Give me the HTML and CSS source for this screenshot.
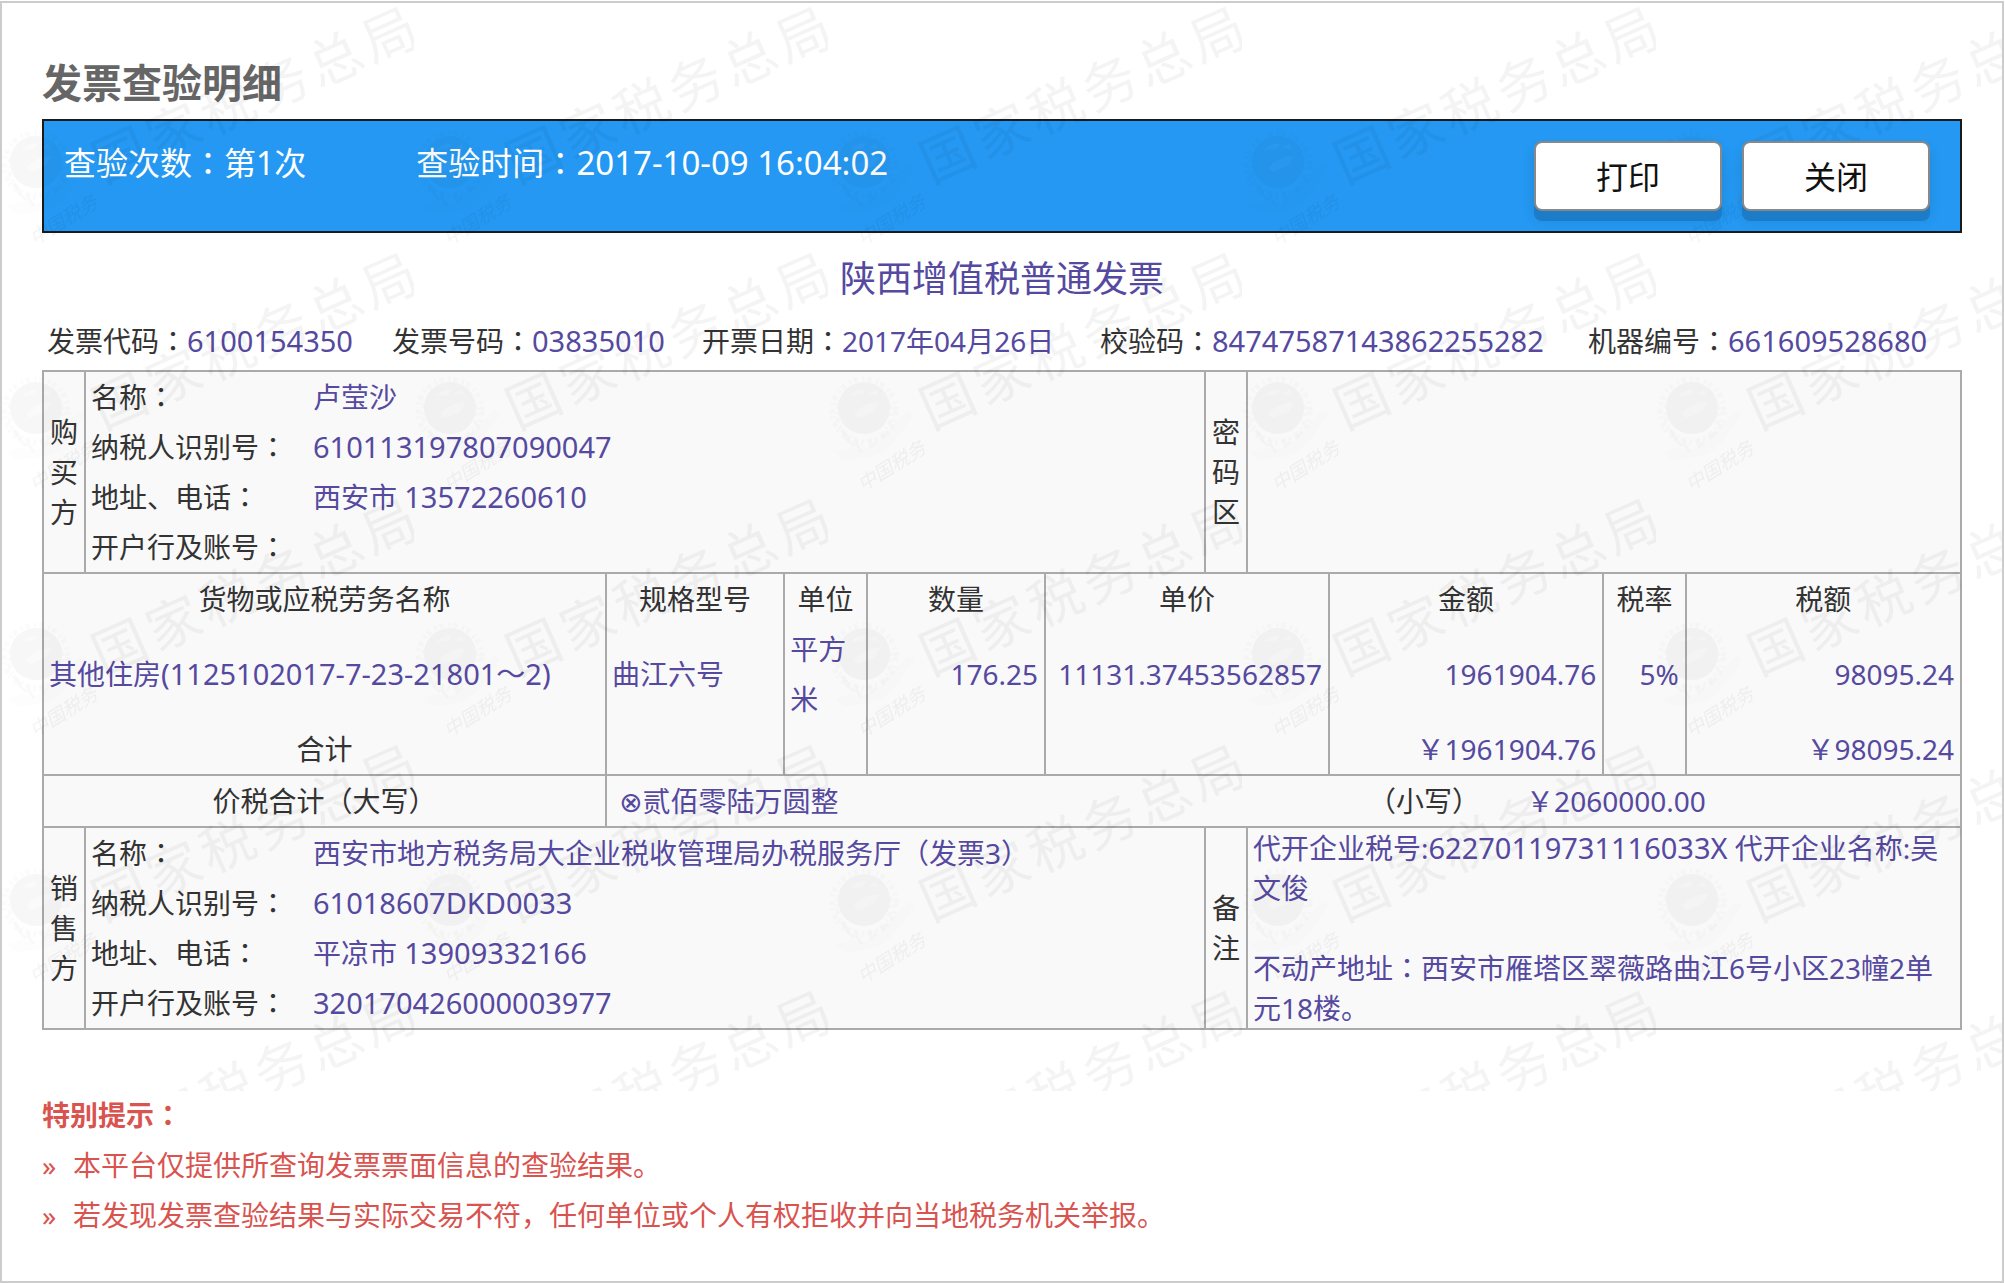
FILE: index.html
```html
<!DOCTYPE html>
<html lang="zh-CN">
<head>
<meta charset="utf-8">
<meta name="viewport" content="width=device-width, initial-scale=1">
<title>发票查验明细</title>
<link rel="stylesheet" href="styles.css">
</head>
<body>
<main class="frame">
  <h1 class="page-title">发票查验明细</h1>

  <section class="bar">
    <p class="bar-item">查验次数<span class="mid" lang="zh-TW">：</span>第1次</p>
    <p class="bar-item">查验时间<span class="mid" lang="zh-TW">：</span><span class="n">2017-10-09 16:04:02</span></p>
    <div class="bar-actions">
      <button type="button" class="btn">打印</button>
      <button type="button" class="btn">关闭</button>
    </div>
  </section>

  <h2 class="invoice-title">陕西增值税普通发票</h2>

  <ul class="meta">
    <li>发票代码<span class="mid" lang="zh-TW">：</span><span class="val n">6100154350</span></li>
    <li>发票号码<span class="mid" lang="zh-TW">：</span><span class="val n">03835010</span></li>
    <li>开票日期<span class="mid" lang="zh-TW">：</span><span class="val">2017年04月26日</span></li>
    <li>校验码<span class="mid" lang="zh-TW">：</span><span class="val n">84747587143862255282</span></li>
    <li>机器编号<span class="mid" lang="zh-TW">：</span><span class="val n">661609528680</span></li>
  </ul>

  <div class="invoice">
    <table class="grid party">
      <colgroup><col class="c-side"><col><col class="c-side"><col class="c-note"></colgroup>
      <tr>
        <th class="side" scope="row">购买方</th>
        <td>
          <dl class="fields">
            <dt>名称<span class="mid" lang="zh-TW">：</span></dt><dd>卢莹沙</dd>
            <dt>纳税人识别号<span class="mid" lang="zh-TW">：</span></dt><dd><span class="n">610113197807090047</span></dd>
            <dt>地址、电话<span class="mid" lang="zh-TW">：</span></dt><dd>西安市 <span class="n">13572260610</span></dd>
            <dt>开户行及账号<span class="mid" lang="zh-TW">：</span></dt><dd></dd>
          </dl>
        </td>
        <th class="side" scope="row">密码区</th>
        <td></td>
      </tr>
    </table>

    <table class="grid items">
      <colgroup><col class="c-name"><col class="c-spec"><col class="c-unit"><col class="c-qty"><col class="c-price"><col class="c-amount"><col class="c-rate"><col></colgroup>
      <thead>
        <tr>
          <th scope="col">货物或应税劳务名称</th>
          <th scope="col">规格型号</th>
          <th scope="col">单位</th>
          <th scope="col">数量</th>
          <th scope="col">单价</th>
          <th scope="col">金额</th>
          <th scope="col">税率</th>
          <th scope="col">税额</th>
        </tr>
      </thead>
      <tbody>
        <tr class="val">
          <td>其他住房<span class="n">(1125102017-7-23-21801～2)</span></td>
          <td>曲江六号</td>
          <td>平方米</td>
          <td class="num">176.25</td>
          <td class="num">11131.37453562857</td>
          <td class="num">1961904.76</td>
          <td class="num">5%</td>
          <td class="num">98095.24</td>
        </tr>
      </tbody>
      <tfoot>
        <tr class="val">
          <th scope="row">合计</th>
          <td></td><td></td><td></td><td></td>
          <td class="num">￥1961904.76</td>
          <td></td>
          <td class="num">￥98095.24</td>
        </tr>
      </tfoot>
    </table>

    <table class="grid total">
      <colgroup><col class="c-name"><col></colgroup>
      <tr>
        <th scope="row">价税合计（大写）</th>
        <td>
          <div class="sum">
            <span class="val"><span class="seal">⊗</span>贰佰零陆万圆整</span>
            <span>（小写）</span>
            <span class="val">￥2060000.00</span>
          </div>
        </td>
      </tr>
    </table>

    <table class="grid party">
      <colgroup><col class="c-side"><col><col class="c-side"><col class="c-note"></colgroup>
      <tr>
        <th class="side" scope="row">销售方</th>
        <td>
          <dl class="fields">
            <dt>名称<span class="mid" lang="zh-TW">：</span></dt><dd>西安市地方税务局大企业税收管理局办税服务厅（发票3）</dd>
            <dt>纳税人识别号<span class="mid" lang="zh-TW">：</span></dt><dd><span class="n">61018607DKD0033</span></dd>
            <dt>地址、电话<span class="mid" lang="zh-TW">：</span></dt><dd>平凉市 <span class="n">13909332166</span></dd>
            <dt>开户行及账号<span class="mid" lang="zh-TW">：</span></dt><dd><span class="n">320170426000003977</span></dd>
          </dl>
        </td>
        <th class="side" scope="row">备注</th>
        <td class="note val">代开企业税号:<span class="n">62270119731116033X</span> 代开企业名称:吴文俊<br><br>不动产地址<span class="mid" lang="zh-TW">：</span>西安市雁塔区翠薇路曲江6号小区23幢2单元18楼。</td>
      </tr>
    </table>
  </div>

  <section class="tips">
    <h3 class="tips-title">特别提示<span class="mid" lang="zh-TW">：</span></h3>
    <ul class="tips-list">
      <li>本平台仅提供所查询发票票面信息的查验结果。</li>
      <li>若发现发票查验结果与实际交易不符，任何单位或个人有权拒收并向当地税务机关举报。</li>
    </ul>
  </section>

  <svg class="watermark" aria-hidden="true">
    <defs>
      <pattern id="mark" width="414" height="246" patternUnits="userSpaceOnUse" x="-2" y="-3">
        <text class="mark-text" transform="translate(103 184) rotate(-24)" x="0 59 118 177 236 295" y="0">国家税务总局</text>
        <g fill="#333" opacity=".9">
          <circle cx="36" cy="162" r="26"/>
          <circle cx="36" cy="165" r="32" fill="none" stroke="#333" stroke-width="5" stroke-dasharray="4 5 2 3" opacity=".5"/>
          <circle cx="36" cy="168" r="27" fill="none" stroke="#333" stroke-width="4" stroke-dasharray="2 4 5 3" opacity=".4"/>
          <path d="M8 206q4 6 10 8l16-2q20-2 32-16l20-28-6-4-16 16q-12 20-30 24l-12-2z" opacity=".25"/>
          <path d="M18 192l8 8M28 198l6 8M42 202l6-6M54 192l6-6M14 184l6 8" stroke="#333" stroke-width="3" opacity=".6"/>
        </g>
        <g fill="#fff" opacity=".4">
          <path d="M22 150q8-8 16-6l-4 5zM40 148l8-4 2 5zM26 168q10-12 26-12l-6 10-16 6z"/>
        </g>
        <text class="mark-sign" transform="translate(35 246) rotate(-32)">中国税务</text>
      </pattern>
    </defs>
    <rect width="100%" height="100%" fill="url(#mark)"/>
  </svg>
</main>
</body>
</html>
```

FILE: styles.css
```css
* {
  box-sizing: border-box;
}

body {
  margin: 0;
  padding: 1px 1px 0 0;
  background: #fff;
  color: #333;
  font: 28px/50px "Noto Sans", "Noto Sans CJK SC", sans-serif;
}

h1, h2, h3, p, ul, dl, dd {
  margin: 0;
  padding: 0;
}

ul {
  list-style: none;
}

.frame {
  position: relative;
  min-height: calc(100vh - 1px);
  padding: 50px 40px 36px;
  border: 2px solid #ccc;
}

/* Full-width punctuation centred in its square */
.mid {
  font-family: "Noto Sans CJK TC", sans-serif;
  line-height: 1;
}

/* Long runs of digits */
.n {
  font-size: 29px;
  line-height: 1;
}

.bar .n {
  font-size: 33px;
}

.seal {
  font-family: "DejaVu Sans", sans-serif;
  line-height: 1;
}

.val,
.fields dd {
  color: #5549a0;
}

.page-title {
  color: #666;
  font-size: 40px;
  line-height: 60px;
  margin-bottom: 6px;
}

.bar {
  display: flex;
  align-items: flex-start;
  gap: 110px;
  padding: 20px 30px 20px 20px;
  border: 2px solid #1a1a1a;
  background: #2498f2;
  color: #fff;
  font-size: 32px;
  line-height: 44px;
}

.bar-actions {
  position: relative;
  z-index: 2;
  display: flex;
  gap: 20px;
  margin-left: auto;
}

.btn {
  width: 188px;
  height: 70px;
  padding: 2px 0 0;
  border: 2px solid #888;
  border-radius: 8px;
  background: #fff;
  box-shadow: 0 10px 0 #1c7cc8, 0 8px 12px 2px rgba(0, 0, 0, .08);
  color: #111;
  font: inherit;
  cursor: pointer;
}

.invoice-title {
  margin: 22px 0 13px;
  color: #5549a0;
  font-size: 36px;
  font-weight: 400;
  line-height: 48px;
  text-align: center;
}

.meta {
  display: grid;
  grid-template-columns: 345fr 310fr 398fr 488fr 374fr;
  padding-left: 5px;
  margin-bottom: 4px;
  white-space: nowrap;
}

.invoice {
  border-top: 2px solid #aaa;
}

.grid {
  width: 100%;
  table-layout: fixed;
  border-spacing: 0;
  border-left: 2px solid #aaa;
  border-bottom: 2px solid #aaa;
  background: #f9f9f9;
}

.grid th {
  color: #333;
  font-weight: 400;
  text-align: center;
}

.grid th,
.grid td {
  height: 50px;
  padding: 0 5px;
  border-right: 2px solid #aaa;
}

.c-side { width: 42px; }
.c-note { width: 714px; }
.c-name { width: 29.35%; }
.c-spec { width: 9.3%; }
.c-unit { width: 4.3%; }
.c-qty { width: 9.3%; }
.c-price { width: 14.8%; }
.c-amount { width: 14.3%; }
.c-rate { width: 4.3%; }

.grid .side {
  line-height: 40px;
}

.fields {
  display: grid;
  grid-template-columns: 222px 1fr;
  grid-auto-rows: 50px;
}

.grid .num {
  padding-right: 6px;
  text-align: right;
  white-space: nowrap;
}

.grid .note {
  line-height: 40px;
}

.sum {
  display: grid;
  grid-template-columns: 758fr 160fr 434fr;
  padding-left: 7px;
}

.tips {
  margin-top: 60px;
  color: #d9534f;
}

.tips-title {
  font-size: 28px;
}

.tips-list li {
  display: flex;
}

.tips-list li::before {
  content: "»";
  width: 31px;
  flex: none;
}

.watermark {
  position: absolute;
  inset: 0 0 auto 0;
  z-index: 1;
  width: 100%;
  height: 1088px;
  opacity: .04;
  pointer-events: none;
}

.mark-text {
  font: 54px "Noto Sans CJK SC", sans-serif;
}

.mark-sign {
  font: italic 19px "Noto Sans CJK SC", sans-serif;
}
```
